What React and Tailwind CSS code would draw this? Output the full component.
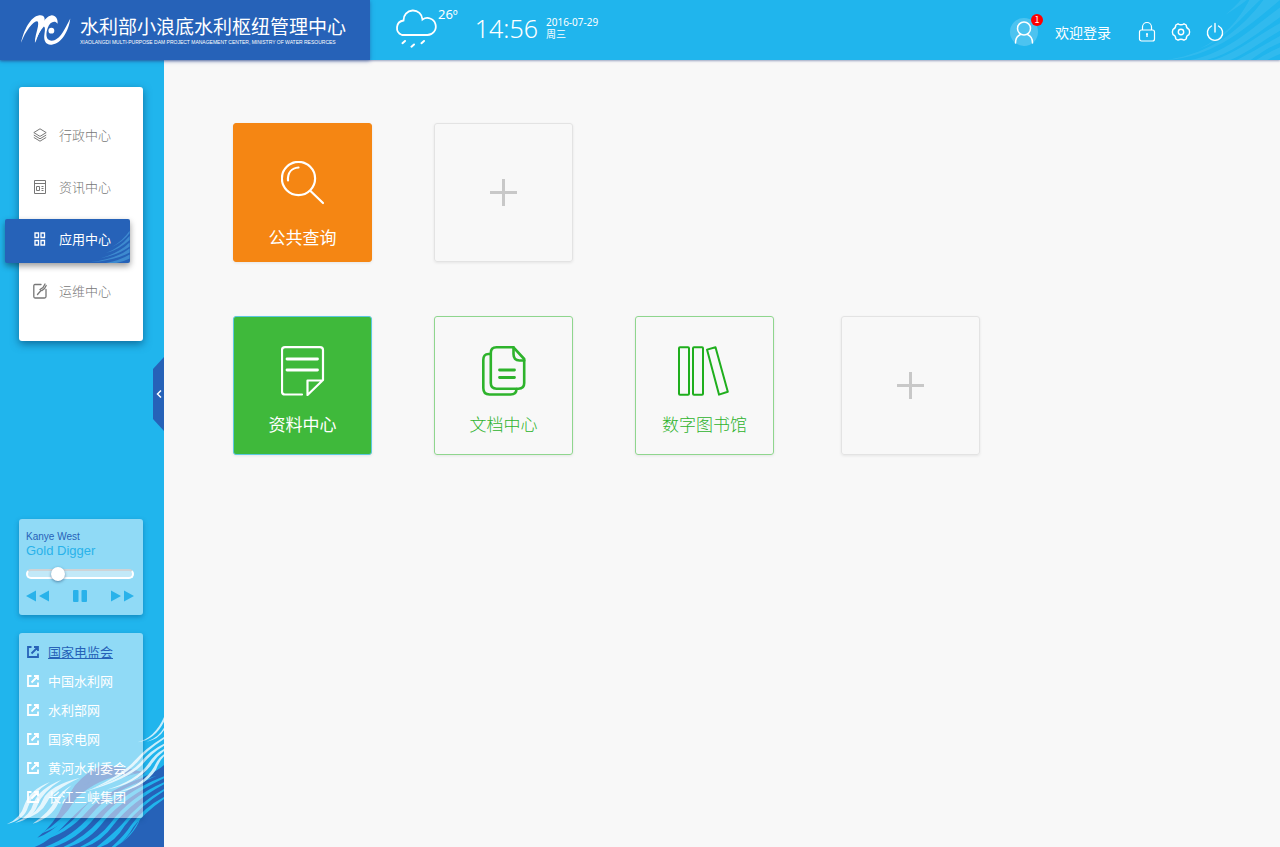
import React, { useState } from "react"

const navItems = [
  { id: "admin", label: "行政中心", icon: LayersIcon },
  { id: "news", label: "资讯中心", icon: NewsIcon },
  { id: "apps", label: "应用中心", icon: AppsIcon },
  { id: "ops", label: "运维中心", icon: EditIcon },
]

const links = ["国家电监会", "中国水利网", "水利部网", "国家电网", "黄河水利委会", "长江三峡集团"]

function Logo() {
  return (
    <svg viewBox="16 10 154 98" className="h-8 w-[51px] shrink-0" fill="#fff">
      <path d="M18 98 C26 62 46 18 74 14 C92 12 94 26 86 44 C76 62 68 80 62 98 C58 80 74 50 70 34 C62 24 34 56 18 98Z" />
      <path d="M60 98 C68 62 88 18 112 14 C124 14 132 26 130 40 C122 28 106 34 100 52 C94 68 94 84 104 90 C116 96 132 88 146 66 C156 50 162 38 169 24 C164 62 142 102 112 104 C94 106 86 92 90 70 C92 58 92 50 88 48 C78 58 68 76 60 98Z" />
      <circle cx="111" cy="61" r="9" />
    </svg>
  )
}

function CloudIcon() {
  return (
    <svg viewBox="1 0 44 40" className="h-10 w-11 shrink-0" fill="none" stroke="#fff" strokeWidth="1.8" strokeLinecap="round">
      <path d="M9 27 H34 A8.500 8.500 0 1 0 29.500 11.500 A9.500 9.500 0 0 0 10.500 12.500 A7.500 7.500 0 0 0 9 27Z" />
      <path d="M12 33 l-2.500 2.200 M21 36.500 l-2.500 2.200 M31 33 l-2.500 2.200" strokeWidth="2" />
    </svg>
  )
}

function UserIcon() {
  return (
    <svg viewBox="0 0 28 28" className="h-7 w-7" fill="none" stroke="#fff" strokeWidth="1.5" strokeLinecap="round">
      <circle cx="14" cy="10.500" r="6.500" />
      <path d="M5.500 25 C5.500 20 8 17.500 10.500 16.500 M22.500 25 C22.500 20 20 17.500 17.500 16.500" />
    </svg>
  )
}

function LockIcon() {
  return (
    <svg viewBox="0 0 18 22" className="h-[22px] w-[18px]" fill="none" stroke="#fff" strokeWidth="1.2">
      <rect x="1.500" y="9" width="15" height="11" rx="2" />
      <path d="M4.500 9 V6 A4.500 4.500 0 0 1 13.500 6 V9" />
      <path d="M9 12.500 V16 M8 13 h2" strokeWidth="1.400" />
    </svg>
  )
}

function GearIcon() {
  return (
    <svg viewBox="0 0 20 20" className="h-5 w-5" fill="none" stroke="#fff" strokeWidth="1.400" strokeLinejoin="round">
      <path d="M7 1.800 Q10 3.800 13 1.800 L15.200 3 Q15.200 6.300 18 7.300 Q19.200 10 18 12.700 Q15.200 13.700 15.200 17 L13 18.200 Q10 16.200 7 18.200 L4.800 17 Q4.800 13.700 2 12.700 Q0.800 10 2 7.300 Q4.800 6.300 4.800 3Z" />
      <circle cx="10" cy="10" r="2.700" />
    </svg>
  )
}

function PowerIcon() {
  return (
    <svg viewBox="0 0 18 20" className="h-5 w-[18px]" fill="none" stroke="#fff" strokeWidth="1.400" strokeLinecap="round">
      <path d="M9 1.500 V10 M5.500 4 A7.600 7.600 0 1 0 12.500 4" />
    </svg>
  )
}

function LayersIcon() {
  return (
    <svg viewBox="0 0 14 14" className="h-3.5 w-3.5" fill="none" stroke="currentColor" strokeLinejoin="round">
      <path d="M7 0.800 L13.200 4.600 L7 8.400 L0.800 4.600Z M0.800 7 L7 10.800 L13.200 7 M0.800 9.400 L7 13.200 L13.200 9.400" />
    </svg>
  )
}

function NewsIcon() {
  return (
    <svg viewBox="0 0 14 14" className="h-3.5 w-3.5" fill="none" stroke="currentColor">
      <path d="M1.500 0.500 H12.500 V13.500 H1.500Z M1.500 3.500 H12.500 M3.500 6.500 H6.500 V10.500 H3.500Z M8.500 6.500 H10.500 M8.500 8.500 H10.500 M8.500 10.500 H10.500" />
    </svg>
  )
}

function AppsIcon() {
  return (
    <svg viewBox="0 0 14 14" className="h-3.5 w-3.5" fill="none" stroke="currentColor" strokeWidth="1.300">
      <path d="M2 1 H5.500 V5.500 H2Z M8 1 H11.500 V5.500 H8Z M2 8.500 H5.500 V13 H2Z M8 8.500 H11.500 V13 H8Z" />
    </svg>
  )
}

function EditIcon() {
  return (
    <svg viewBox="0 0 14 16" className="h-4 w-3.5" fill="none" stroke="currentColor" strokeWidth="1.300" strokeLinecap="round">
      <path d="M8 1.500 H2 Q0.800 1.500 0.800 3 V13.500 Q0.800 15 2 15 H11.500 Q13 15 13 13.500 V6.500" />
      <path d="M4.500 11.500 L8 7.500 M7 6.500 L10 4.500 L12 1 M9 7.500 L11.500 5.500 L13.200 2.500" />
    </svg>
  )
}

function ExternalIcon() {
  return (
    <svg viewBox="0 0 12 12" className="h-3 w-3 shrink-0" fill="none" stroke="currentColor" strokeWidth="1.800">
      <path d="M4.500 1 H1 V11 H11 V7.500 M4.500 7.500 L10.500 1.500 M7 1 H11 V5" />
    </svg>
  )
}

function SearchIcon() {
  return (
    <svg viewBox="1 1 44 44" className="h-11 w-11" fill="none" stroke="#fff" strokeWidth="2.200" strokeLinecap="round">
      <circle cx="18.500" cy="18.500" r="16.600" />
      <path d="M8 20.500 C7.500 12.500 12 8 18.500 7.500 M30.500 31 L43 43" />
    </svg>
  )
}

function NoteIcon() {
  return (
    <svg viewBox="0.500 0 44 50" className="h-[50px] w-11" fill="none" stroke="#fff" strokeWidth="2.200" strokeLinecap="round" strokeLinejoin="round">
      <path d="M21.500 48.500 H4.500 Q1.500 48.500 1.500 45.500 V4 Q1.500 1.200 4.500 1.200 H39.500 Q42.500 1.200 42.500 4 V34 L27 49 V34.500 H42" />
      <path d="M6.500 13 H37 M6.500 24 H37" strokeWidth="2.800" />
    </svg>
  )
}

function DocumentsIcon() {
  return (
    <svg viewBox="0.500 0 44 50" className="h-[50px] w-11" fill="none" stroke="#2eb32c" strokeWidth="2.600" strokeLinecap="round" strokeLinejoin="round">
      <path d="M9 8 H7 Q1.800 8 1.800 14 V42 Q1.800 48.500 8 48.500 H29 Q35 48.500 35 43" />
      <path d="M32 1.300 H15 Q9.300 1.300 9.300 7 V37 Q9.300 42.700 15 42.700 H37 Q42.700 42.700 42.700 37 V13 Z" />
      <path d="M32 1.300 V8 Q32 14.500 38 14.500 H42.700" />
      <path d="M18 24 H33 M18 31.500 H33" strokeWidth="2.800" />
    </svg>
  )
}

function BooksIcon() {
  return (
    <svg viewBox="1.500 0 52 50" className="h-[50px] w-[52px]" fill="none" stroke="#1fae1d" strokeWidth="2" strokeLinejoin="round" overflow="visible">
      <rect x="1.500" y="1.200" width="10" height="47.500" rx="1" />
      <rect x="15.500" y="1.200" width="10" height="47.500" rx="1" />
      <path d="M29.500 3.600 L38 1.200 L50.300 45.800 L41.500 48.600 Z" />
    </svg>
  )
}

function HeaderWave() {
  return (
    <svg viewBox="560 0 340 180" className="absolute right-0 bottom-0 h-[60px] w-[113px]" fill="#fff" fillOpacity="0.08">
      <path d="M735 45 Q775 20 800 0 H782 Q765 20 735 45Z" />
      <path d="M650 150 C735 120 775 60 840 0 H808 C775 60 735 112 650 150Z" />
      <path d="M560 180 C700 170 790 90 900 0 H850 C790 80 700 160 560 180Z" />
      <path d="M630 180 C740 160 820 80 900 22 V52 C830 100 760 160 680 180Z" />
      <path d="M700 180 C780 155 840 100 900 70 V92 C850 120 800 160 750 180Z" />
      <path d="M770 180 C810 160 860 130 900 108 V128 C870 140 840 160 812 180Z" />
      <path d="M828 180 Q870 155 900 142 V162 Q880 170 862 180Z" />
    </svg>
  )
}

function ButtonWave() {
  return (
    <svg viewBox="268 88 122 100" className="absolute right-0 bottom-0 h-[33px] w-[41px]" fill="#4aa0dc" fillOpacity="0.65">
      <path d="M335 140 Q370 120 390 90 V98 Q370 125 335 140Z" />
      <path d="M318 158 Q360 142 390 106 V118 Q360 146 318 158Z" />
      <path d="M300 174 Q355 160 390 126 V138 Q355 164 300 174Z" />
      <path d="M268 186 Q350 176 390 144 V156 Q350 180 268 186Z" />
      <path d="M318 188 Q360 180 390 162 V174 Q370 184 350 188Z" />
    </svg>
  )
}

function SidebarWave() {
  return (
    <svg viewBox="0 0 492 390" className="absolute bottom-0 left-0 h-[130px] w-[164px]">
      <path d="M104 390 C180 360 210 290 290 240 C370 190 440 190 492 144 V390Z" fill="#2662b8" />
      <path d="M225 205 Q260 165 305 145 Q370 150 430 165 Q350 180 285 222 Q235 255 190 310 Q150 350 112 362 Q165 320 190 260Z" fill="#2662b8" />
      <g fill="#20b5ed">
        <path d="M122 350 Q190 310 225 248 Q290 180 405 168 Q305 196 250 258 Q195 326 122 350Z" />
        <path d="M116 372 Q200 340 248 276 Q310 206 440 178 Q325 216 265 280 Q200 356 116 372Z" />
        <path d="M135 390 Q220 358 274 292 Q330 220 470 176 Q350 228 288 298 Q232 368 160 390Z" />
        <path d="M190 390 Q255 360 302 306 Q365 228 492 178 V184 Q375 240 314 310 Q268 372 206 390Z" />
        <path d="M240 390 Q300 360 332 318 Q390 240 492 196 V202 Q395 255 342 322 Q306 374 254 390Z" />
        <path d="M290 390 Q340 350 366 322 Q415 258 492 216 V222 Q420 268 374 326 Q346 374 302 390Z" />
        <path d="M335 390 Q376 352 392 326 Q430 272 492 240 V246 Q436 285 400 330 Q380 368 346 390Z" />
        <path d="M355 384 Q405 345 425 290 Q412 345 355 384Z" />
      </g>
      <g fill="#2662b8">
        <path d="M175 300 Q205 235 280 185 Q225 235 175 300Z" />
        <path d="M400 205 Q455 180 478 125 Q470 180 400 205Z" />
        <path d="M390 195 Q440 165 462 118 Q450 170 390 195Z" />
      </g>
      <g fill="#c9edfb">
        <path d="M20 322 Q62 305 74 262 Q90 218 150 195 Q96 228 84 270 Q74 308 20 322Z" />
        <path d="M45 318 Q90 298 102 255 Q118 215 185 188 Q126 225 112 266 Q98 305 45 318Z" />
        <path d="M70 306 Q115 285 130 245 Q150 205 240 182 Q158 220 142 254 Q122 294 70 306Z" />
        <path d="M98 320 Q150 285 165 250 Q185 222 215 205 Q184 232 174 260 Q154 302 98 320Z" />
        <path d="M250 225 Q380 180 420 138 Q450 100 492 80 V86 Q452 110 426 144 Q380 190 250 225Z" />
        <path d="M275 216 Q370 170 405 130 Q435 95 492 60 V66 Q438 102 413 134 Q370 182 275 216Z" />
        <path d="M320 218 Q410 190 445 140 Q465 110 492 96 V102 Q468 120 452 146 Q410 200 320 218Z" />
        <path d="M350 226 Q430 205 462 150 Q475 122 492 112 V118 Q478 132 468 158 Q430 214 350 226Z" />
        <path d="M412 76 Q465 62 492 0 V14 Q465 68 412 76Z" />
        <path d="M440 74 Q475 62 492 32 V40 Q475 68 440 74Z" />
      </g>
    </svg>
  )
}

function Header() {
  return (
    <header className="relative z-20 flex h-[60px] bg-[#20b5ed] text-white shadow-[0_1px_2px_rgba(60,80,140,0.5)]">
      <div className="flex w-[370px] shrink-0 items-center gap-[9px] bg-[#2662b8] pl-5 shadow-[0_1px_4px_rgba(30,60,140,0.5)]">
        <Logo />
        <div className="whitespace-nowrap">
          <h1 className="text-[19px] leading-6">水利部小浪底水利枢纽管理中心</h1>
          <p className="font-['Liberation_Sans',sans-serif] text-[5px] leading-2">
            XIAOLANGDI MULTI-PURPOSE DAM PROJECT MANAGEMENT CENTER, MINISTRY OF WATER RESOURCES
          </p>
        </div>
      </div>
      <div className="flex items-start pt-2 pl-6 font-['Noto_Sans','Noto_Sans_CJK_SC',sans-serif]">
        <CloudIcon />
        <span className="text-[13px] leading-3">26º</span>
        <time className="flex items-center gap-2 pl-[17px]">
          <span className="text-[25px] leading-10 font-light">14:56</span>
          <span className="flex flex-col text-[10px] leading-3">
            <span>2016-07-29</span>
            <span className="font-['Noto_Sans_CJK_SC',sans-serif]">周三</span>
          </span>
        </time>
      </div>
      <HeaderWave />
      <div className="relative ml-auto flex items-center gap-[15px] pt-1 pr-14">
        <div className="relative mr-0.5 h-7 w-7 rounded-full bg-white/20">
          <UserIcon />
          <span className="absolute -top-1 -right-[5px] flex h-3 w-3 items-center justify-center rounded-full bg-[#f00] text-[9px] leading-3">1</span>
        </div>
        <span className="pr-3 text-[14px]">欢迎登录</span>
        <button type="button" aria-label="锁定"><LockIcon /></button>
        <button type="button" aria-label="设置"><GearIcon /></button>
        <button type="button" aria-label="退出"><PowerIcon /></button>
      </div>
    </header>
  )
}

function Player() {
  const [position, setPosition] = useState(25)
  return (
    <section className="rounded-[3px] bg-white/50 pt-3 pr-[9px] pb-[13px] pl-[7px] font-['Liberation_Sans',sans-serif] text-[#29b2ea] shadow-[0_2px_5px_rgba(0,70,120,0.4)]">
      <p className="text-[10px] leading-3 text-[#2662b8]">Kanye West</p>
      <p className="text-[13px] leading-4">Gold Digger</p>
      <input
        type="range"
        aria-label="Gold Digger"
        value={position}
        onChange={(e) => setPosition(e.target.value)}
        className="mt-2.5 block h-2.5 w-full appearance-none rounded-full border-2 border-white border-t-[#cfd3d6] bg-[#c2e9f8] [&::-webkit-slider-thumb]:h-3.5 [&::-webkit-slider-thumb]:w-3.5 [&::-webkit-slider-thumb]:appearance-none [&::-webkit-slider-thumb]:rounded-full [&::-webkit-slider-thumb]:bg-white [&::-webkit-slider-thumb]:shadow-[0_1px_3px_rgba(40,70,110,0.6)]"
      />
      <div className="mt-[11px] flex items-center justify-between">
        <button type="button" aria-label="上一首">
          <svg viewBox="0 0 24 12" className="h-3 w-6" fill="currentColor"><path d="M10 0.500 V11.500 L0 6Z M23 0.500 V11.500 L13 6Z" /></svg>
        </button>
        <button type="button" aria-label="暂停">
          <svg viewBox="0 0 14 12" className="h-3 w-3.5" fill="currentColor"><rect width="5.500" height="12" rx="1" /><rect x="8.500" width="5.500" height="12" rx="1" /></svg>
        </button>
        <button type="button" aria-label="下一首">
          <svg viewBox="0 0 24 12" className="h-3 w-6" fill="currentColor"><path d="M1 0.500 V11.500 L11 6Z M14 0.500 V11.500 L24 6Z" /></svg>
        </button>
      </div>
    </section>
  )
}

function Sidebar() {
  const [active, setActive] = useState("apps")
  return (
    <aside className="relative flex w-[164px] shrink-0 flex-col bg-[#20b5ed] pt-[27px] pr-[21px] pb-[29px] pl-[19px]">
      <SidebarWave />
      <nav className="relative flex flex-col gap-2 rounded-[3px] bg-white pt-7 pb-[26px] shadow-[0_3px_8px_rgba(0,60,100,0.6)]">
        {navItems.map(({ id, label, icon: Icon }) => (
          <button
            key={id}
            type="button"
            onClick={() => setActive(id)}
            className={
              id === active
                ? "relative -ml-3.5 mr-[13px] flex h-11 items-center gap-3 rounded-[2px] bg-[#2662b8] pb-1 pl-7 text-[13px] text-white shadow-[0_3px_6px_rgba(0,0,0,0.4)]"
                : "flex h-11 items-center gap-3 pb-1 pl-3.5 text-[13px] font-light text-[#777]"
            }
          >
            {id === active && <ButtonWave />}
            <Icon />
            <span className="relative">{label}</span>
          </button>
        ))}
      </nav>
      <button type="button" aria-label="收起" className="absolute top-[297px] right-0 h-[74px] w-[11px]">
        <svg viewBox="0 0 11 74" className="h-full w-full">
          <path d="M11 0 V74 L0 62 V12Z" fill="#2662b8" />
          <path d="M8 33.500 L4.500 37 L8 40.500" fill="none" stroke="#fff" strokeWidth="1.500" />
        </svg>
      </button>
      <div className="relative mt-auto flex flex-col gap-[18px] pt-12">
        <Player />
        <ul className="rounded-[3px] bg-white/50 pt-1 pb-[7px] shadow-[0_2px_5px_rgba(0,70,120,0.4)]">
          {links.map((name, i) => (
            <li key={name}>
              <a
                href="#"
                className={
                  i === 0
                    ? "flex h-[29px] items-center gap-[9px] pl-2 text-[13px] text-[#2662b8] underline"
                    : "flex h-[29px] items-center gap-[9px] pl-2 text-[13px] text-white"
                }
              >
                <ExternalIcon />
                {name}
              </a>
            </li>
          ))}
        </ul>
      </div>
    </aside>
  )
}

function Tile({ label, icon, className }) {
  return (
    <button type="button" className={`flex h-[139px] w-[139px] flex-col items-center rounded-[3px] border text-[17px] leading-6 shadow-[0_1px_3px_rgba(0,0,0,0.08)] ${className}`}>
      {icon}
      <span>{label}</span>
    </button>
  )
}

function AddTile() {
  return (
    <button type="button" aria-label="添加" className="flex h-[139px] w-[139px] items-center justify-center rounded-[3px] border border-[#e3e3e3] shadow-[0_1px_3px_rgba(0,0,0,0.08)]">
      <svg viewBox="0 0 28 28" className="h-7 w-7" stroke="#c8c8c8" strokeWidth="3">
        <path d="M13.500 0 V27 M0 13.500 H27" />
      </svg>
    </button>
  )
}

const App = () => {
  return (
    <div className="flex min-h-screen flex-col bg-[#f8f8f8] font-['Noto_Sans_CJK_SC',sans-serif]">
      <Header />
      <div className="flex flex-1">
        <Sidebar />
        <main className="flex flex-1 flex-col gap-[54px] pt-[63px] pl-[69px]">
          <section className="flex flex-wrap gap-[62px]">
            <Tile label="公共查询" icon={<SearchIcon />} className="gap-5 border-[#f58613] bg-[#f58613] pt-[37px] text-white" />
            <AddTile />
          </section>
          <section className="grid grid-cols-[139px_139px_144px_139px] gap-x-[62px]">
            <Tile label="资料中心" icon={<NoteIcon />} className="gap-4 border-[#5cc8e0] bg-[#3fb93b] pt-[29px] text-white" />
            <Tile label="文档中心" icon={<DocumentsIcon />} className="gap-4 border-[#8fd68e] pt-[29px] font-light text-[#2eb32c]" />
            <Tile label="数字图书馆" icon={<BooksIcon />} className="gap-4 border-[#8fd68e] pt-[29px] font-light text-[#2eb32c]" />
            <AddTile />
          </section>
        </main>
      </div>
    </div>
  )
}

export default App
